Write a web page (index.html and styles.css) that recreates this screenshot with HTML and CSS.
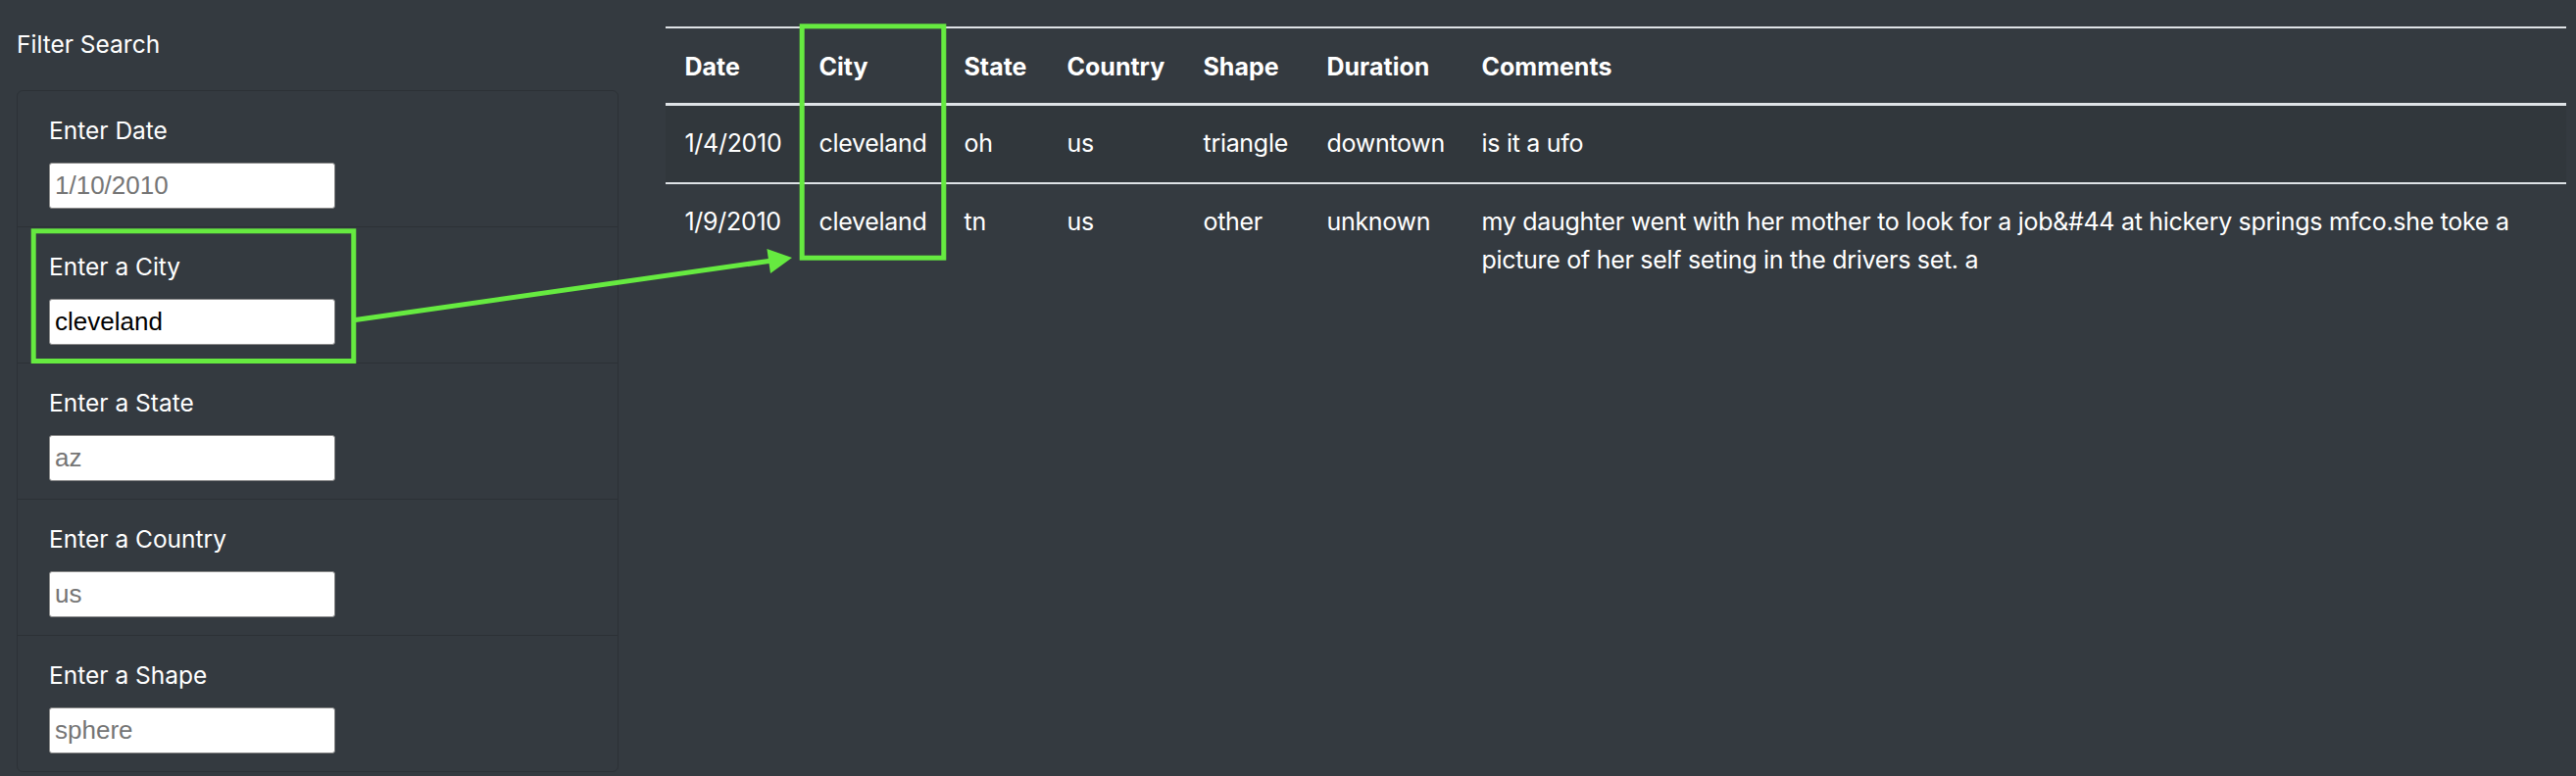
FILE: index.html
```html
<!DOCTYPE html>
<html lang="en">
<head>
<meta charset="utf-8">
<title>UFO Sightings – Filter Search</title>
<link rel="stylesheet" href="styles.css">
</head>
<body>
<div class="page">
  <aside class="sidebar">
    <div class="sidebar-title">Filter Search</div>
    <ul class="filters">
      <li class="filter">
        <label class="filter-label" for="datetime">Enter Date</label>
        <input class="filter-input" id="datetime" type="text" placeholder="1/10/2010">
      </li>
      <li class="filter">
        <label class="filter-label" for="city">Enter a City</label>
        <input class="filter-input" id="city" type="text" placeholder="roswell" value="cleveland">
      </li>
      <li class="filter">
        <label class="filter-label" for="state">Enter a State</label>
        <input class="filter-input" id="state" type="text" placeholder="az">
      </li>
      <li class="filter">
        <label class="filter-label" for="country">Enter a Country</label>
        <input class="filter-input" id="country" type="text" placeholder="us">
      </li>
      <li class="filter">
        <label class="filter-label" for="shape">Enter a Shape</label>
        <input class="filter-input" id="shape" type="text" placeholder="sphere">
      </li>
    </ul>
  </aside>
  <main class="main">
    <table class="ufo-table">
      <colgroup>
        <col class="col-date">
        <col class="col-city">
        <col class="col-state">
        <col class="col-country">
        <col class="col-shape">
        <col class="col-duration">
        <col class="col-comments">
      </colgroup>
      <thead>
        <tr>
          <th>Date</th>
          <th>City</th>
          <th>State</th>
          <th>Country</th>
          <th>Shape</th>
          <th>Duration</th>
          <th>Comments</th>
        </tr>
      </thead>
      <tbody>
        <tr class="striped">
          <td>1/4/2010</td>
          <td>cleveland</td>
          <td>oh</td>
          <td>us</td>
          <td>triangle</td>
          <td>downtown</td>
          <td>is it a ufo</td>
        </tr>
        <tr>
          <td>1/9/2010</td>
          <td>cleveland</td>
          <td>tn</td>
          <td>us</td>
          <td>other</td>
          <td>unknown</td>
          <td>my daughter went with her mother to look for a job&amp;#44 at hickery springs mfco.she toke a picture of her self seting in the drivers set. a</td>
        </tr>
      </tbody>
    </table>
  </main>
</div>
<svg class="annotations" width="2628" height="792" viewBox="0 0 2628 792" aria-hidden="true">
  <rect x="34.2" y="235.8" width="326.6" height="132.7" fill="none" stroke="#66ea40" stroke-width="5"/>
  <rect x="818.2" y="26.8" width="144.6" height="236.4" fill="none" stroke="#66ea40" stroke-width="5"/>
  <line x1="360.8" y1="326.7" x2="786" y2="266.2" stroke="#66ea40" stroke-width="5"/>
  <polygon points="808,263 782.4,254 786,279" fill="#66ea40"/>
</svg>
</body>
</html>
```

FILE: styles.css
```css
html, body {
  margin: 0;
  padding: 0;
  background: #343a40;
}

body {
  color: #ffffff;
  font-family: Inter, "Noto Sans", "Liberation Sans", sans-serif;
  font-size: 25px;
  line-height: 1.5;
  position: relative;
  width: 2628px;
  height: 792px;
  overflow: hidden;
}

.page {
  display: flex;
  align-items: flex-start;
  padding: 27px 10px 0 17px;
}

.sidebar {
  width: 614px;
  flex: none;
}

.sidebar-title {
  font-size: 24.5px;
  line-height: 37.5px;
  margin-bottom: 27px;
}

.filters {
  list-style: none;
  margin: 0;
  padding: 0;
  border: 1px solid rgba(0, 0, 0, 0.15);
  border-radius: 6px;
}

.filter {
  padding: 21px 32px 18px;
}

.filter + .filter {
  border-top: 1px solid rgba(0, 0, 0, 0.15);
}

.filter-label {
  display: block;
  font-size: 24.5px;
  line-height: 39px;
  margin-bottom: 13px;
}

.filter-input {
  display: block;
  box-sizing: border-box;
  width: 292px;
  height: 47px;
  margin: 0;
  padding: 0 5px;
  border: 1px solid #8a8a8a;
  border-radius: 3px;
  background: #ffffff;
  color: #000000;
  font-family: "Liberation Sans", Arial, sans-serif;
  font-size: 26px;
  outline: none;
}

.filter-input::placeholder {
  color: #757575;
}

.main {
  margin-left: 48px;
  width: 1939px;
  flex: none;
}

.ufo-table {
  width: 1939px;
  table-layout: fixed;
  border-collapse: separate;
  border-spacing: 0;
}

.col-date { width: 137px; }
.col-city { width: 148px; }
.col-state { width: 105px; }
.col-country { width: 139px; }
.col-shape { width: 126px; }
.col-duration { width: 158px; }

.ufo-table th,
.ufo-table td {
  padding: 19.5px;
  text-align: left;
  vertical-align: top;
  line-height: 39px;
}

.ufo-table td {
  letter-spacing: -0.3px;
}

.ufo-table th {
  font-weight: 700;
  border-top: 2px solid #dee2e6;
  border-bottom: 3px solid #dee2e6;
  padding-bottom: 17px;
}

.ufo-table tbody tr + tr td {
  border-top: 2px solid #dee2e6;
}

.ufo-table tr.striped td {
  background: rgba(0, 0, 0, 0.05);
}

.annotations {
  position: absolute;
  top: 0;
  left: 0;
  pointer-events: none;
}
```
